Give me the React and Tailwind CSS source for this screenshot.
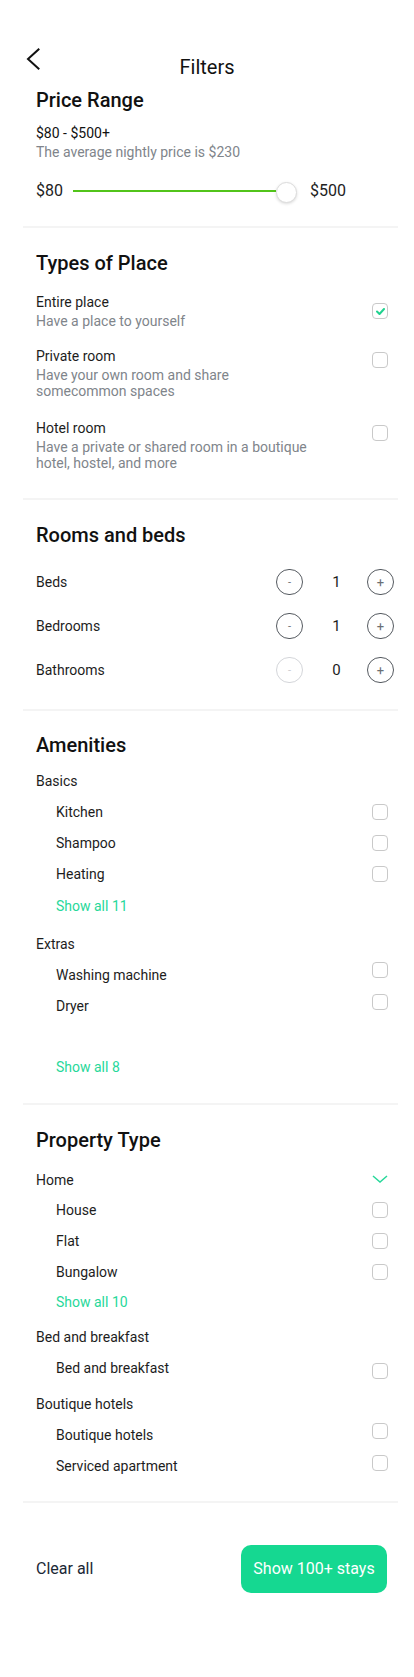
import React from "react";

function Checkbox({ checked = false, className = "" }) {
  return (
    <div
      className={
        "w-[16px] h-[16px] shrink-0 rounded-[4px] border-[1.5px] border-[#c9c9c9] bg-white flex items-center justify-center " +
        className
      }
    >
      {checked && (
        <svg width="9" height="7" viewBox="0 0 9 7">
          <path d="M1 3.5 L3.5 6 L8 1" stroke="#1fd28f" strokeWidth="2" fill="none" strokeLinecap="round" strokeLinejoin="round" />
        </svg>
      )}
    </div>
  );
}

function Divider() {
  return <div className="ml-[23px] mr-[16px] h-[2px] bg-[#f4f4f4]" />;
}

function Heading({ children }) {
  return <h2 className="text-[20px] leading-[24px] font-medium text-[#111]">{children}</h2>;
}

function SubItem({ label, cb = "mt-[2px]", mt = "mt-[11px]" }) {
  return (
    <div className={"flex items-start justify-between pl-[20px] " + mt}>
      <span className="text-[14px] leading-[20px] text-[#1d1d1d]">{label}</span>
      <Checkbox className={cb} />
    </div>
  );
}

function Stepper({ label, value, disabled = false, mt = "" }) {
  return (
    <div className={"flex items-center justify-between h-[26px] -mr-[6px] " + mt}>
      <span className="text-[14px] leading-[20px] text-[#1d1d1d]">{label}</span>
      <div className="flex items-center">
        <div
          className={
            "w-[27px] h-[26px] rounded-full border flex items-center justify-center text-[11px] leading-none " +
            (disabled ? "border-[#d4d6da] text-[#c9cbcf]" : "border-[#555a60] text-[#6b6f75]")
          }
        >
          -
        </div>
        <div className="w-[64px] text-center pl-[3px] text-[15px] text-[#1d1d1d]">{value}</div>
        <div className="w-[27px] h-[26px] rounded-full border border-[#555a60] text-[#6b6f75] flex items-center justify-center text-[13px] leading-none">
          +
        </div>
      </div>
    </div>
  );
}

function ShowAll({ children, mt }) {
  return <div className={"pl-[20px] text-[14px] leading-[20px] text-[#27d89a] " + mt}>{children}</div>;
}

function GroupLabel({ children, mt, right = null }) {
  return (
    <div className={"flex items-center justify-between " + mt}>
      <span className="text-[14px] leading-[20px] text-[#1d1d1d]">{children}</span>
      {right}
    </div>
  );
}

function PlaceItem({ title, desc, cb, mt }) {
  return (
    <div className={"flex items-start justify-between " + mt}>
      <div>
        <div className="text-[14px] leading-[20px] text-[#1d1d1d]">{title}</div>
        <div className="mt-[1px] text-[14px] leading-[16px] text-[#80858b]">{desc}</div>
      </div>
      <Checkbox checked={title === "Entire place"} className={cb} />
    </div>
  );
}

export default function App() {
  return (
    <div className="w-[414px] min-h-[1677px] bg-white font-['Roboto',sans-serif] text-[#1d1d1d]">
      {/* Header */}
      <div className="grid grid-cols-[1fr_auto_1fr] items-start pt-[48px]">
        <div className="pl-[26px]">
          <svg width="14" height="22" viewBox="0 0 14 22">
            <path d="M12.5 1.5 L2 11 L12.5 20.5" stroke="#111" strokeWidth="2" fill="none" strokeLinecap="square" />
          </svg>
        </div>
        <h1 className="mt-[7px] text-[20px] leading-[24px] text-[#111]">Filters</h1>
        <div />
      </div>

      {/* Price range */}
      <section className="pl-[36px] pr-[26px] pt-[9px] pb-[23px]">
        <Heading>Price Range</Heading>
        <div className="mt-[12px] text-[14px] leading-[19px] text-[#111]">$80 - $500+</div>
        <div className="text-[14px] leading-[19px] text-[#80858b]">The average nightly price is $230</div>
        <div className="mt-[17px] flex items-center h-[24px]">
          <span className="text-[16px] text-[#222]">$80</span>
          <div className="ml-[10px] w-[224px] flex items-center">
            <div className="flex-1 h-[2px] bg-[#52c41a]" />
            <div className="w-[21px] h-[21px] rounded-full bg-white border border-[#dcdcdc] shadow-[0_1px_3px_rgba(0,0,0,0.15)] mt-[2px]" />
          </div>
          <span className="ml-[13px] text-[16px] text-[#222]">$500</span>
        </div>
      </section>
      <Divider />

      {/* Types of place */}
      <section className="pl-[36px] pr-[26px] pt-[23px] pb-[27px]">
        <Heading>Types of Place</Heading>
        <PlaceItem title="Entire place" desc="Have a place to yourself" cb="mt-[11px]" mt="mt-[17px]" />
        <PlaceItem
          title="Private room"
          desc={<>Have your own room and share<br />somecommon spaces</>}
          cb="mt-[6px]"
          mt="mt-[17px]"
        />
        <PlaceItem
          title="Hotel room"
          desc={<>Have a private or shared room in a boutique<br />hotel, hostel, and more</>}
          cb="mt-[7px]"
          mt="mt-[19px]"
        />
      </section>
      <Divider />

      {/* Rooms and beds */}
      <section className="pl-[36px] pr-[26px] pt-[23px] pb-[26px]">
        <Heading>Rooms and beds</Heading>
        <Stepper label="Beds" value="1" mt="mt-[22px]" />
        <Stepper label="Bedrooms" value="1" mt="mt-[18px]" />
        <Stepper label="Bathrooms" value="0" disabled mt="mt-[18px]" />
      </section>
      <Divider />

      {/* Amenities */}
      <section className="pl-[36px] pr-[26px] pt-[22px] pb-[26px]">
        <Heading>Amenities</Heading>
        <GroupLabel mt="mt-[14px]">Basics</GroupLabel>
        <SubItem label="Kitchen" />
        <SubItem label="Shampoo" />
        <SubItem label="Heating" />
        <ShowAll mt="mt-[12px]">Show all 11</ShowAll>
        <GroupLabel mt="mt-[18px]">Extras</GroupLabel>
        <SubItem label="Washing machine" cb="-mt-[3px]" />
        <SubItem label="Dryer" cb="-mt-[2px]" />
        <ShowAll mt="mt-[41px]">Show all 8</ShowAll>
      </section>
      <Divider />

      {/* Property type */}
      <section className="pl-[36px] pr-[26px] pt-[23px] pb-[25px]">
        <Heading>Property Type</Heading>
        <GroupLabel
          mt="mt-[18px]"
          right={
            <svg width="16" height="8" viewBox="0 0 16 8" className="-mt-[3px]">
              <path d="M1 1 L8 7 L15 1" stroke="#27d89a" strokeWidth="1.5" fill="none" />
            </svg>
          }
        >
          Home
        </GroupLabel>
        <SubItem label="House" mt="mt-[10px]" />
        <SubItem label="Flat" />
        <SubItem label="Bungalow" />
        <ShowAll mt="mt-[10px]">Show all 10</ShowAll>
        <GroupLabel mt="mt-[15px]">Bed and breakfast</GroupLabel>
        <SubItem label="Bed and breakfast" cb="mt-[5px]" />
        <GroupLabel mt="mt-[15px]">Boutique hotels</GroupLabel>
        <SubItem label="Boutique hotels" cb="-mt-[2px]" />
        <SubItem label="Serviced apartment" cb="-mt-[1px]" />
      </section>
      <Divider />

      {/* Footer */}
      <div className="flex items-center justify-between pl-[36px] pr-[27px] pt-[42px]">
        <span className="text-[16px] text-[#1b2836]">Clear all</span>
        <button className="w-[146px] h-[48px] rounded-[10px] bg-[#15d891] text-white text-[16px]">
          Show 100+ stays
        </button>
      </div>
    </div>
  );
}
